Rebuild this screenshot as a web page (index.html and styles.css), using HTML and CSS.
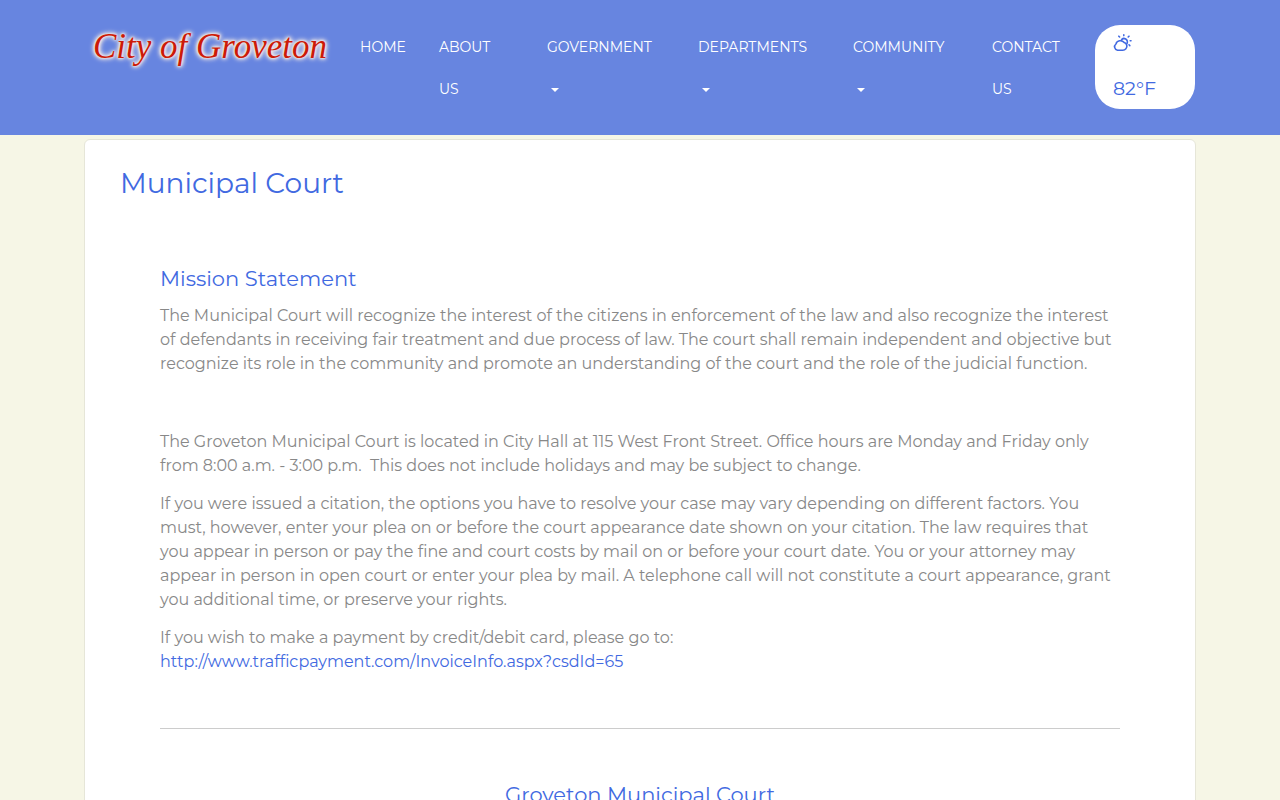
FILE: index.html
```html
<!DOCTYPE html>
<html lang="en">
<head>
    <meta charset="UTF-8">
    <meta name="viewport" content="width=device-width, initial-scale=1.0">
    <title>Municipal Court - City of Groveton</title>
    <link rel="stylesheet" href="styles.css">
</head>
<body>
    <header class="site-header">
        <div class="container header-row">
            <a class="logo" href="#">City of Groveton</a>
            <nav class="main-nav">
                <a class="nav-home" href="#">HOME</a>
                <a class="nav-about" href="#">ABOUT<br>US</a>
                <a class="nav-government" href="#">GOVERNMENT<span class="caret"></span></a>
                <a class="nav-departments" href="#">DEPARTMENTS<span class="caret"></span></a>
                <a class="nav-community" href="#">COMMUNITY<span class="caret"></span></a>
                <a class="nav-contact" href="#">CONTACT<br>US</a>
            </nav>
            <a class="weather" href="#">
                <svg class="weather-icon" viewBox="0 0 20 20" aria-hidden="true">
                    <path d="M4.500 16.300a3.600 3.600 0 0 1-1.600-6.300a4.700 4.500 0 0 1 8.300-1.400a3.700 3.700 0 0 1 1.700 6.100q-1.200 1.500-3.200 1.600z"/>
                    <path d="M8.200 6.300a3.200 3.200 0 1 1 5.800 3.200M10.800.9v.7M5.800 2.200l.8.800M16 2.200l-.8.800M17.200 6.700h.8M16 10.800l.8.800"/>
                </svg>
                <span>82°F</span>
            </a>
        </div>
    </header>

    <main class="container">
        <div class="card">
            <h1>Municipal Court</h1>

            <div class="content">
                <section class="mission">
                    <h2>Mission Statement</h2>
                    <p>The Municipal Court will recognize the interest of the citizens in enforcement of the law and also recognize the interest of defendants in receiving fair treatment and due process of law. The court shall remain independent and objective but recognize its role in the community and promote an understanding of the court and the role of the judicial function.</p>
                </section>

                <section>
                    <p>The Groveton Municipal Court is located in City Hall at 115 West Front Street. Office hours are Monday and Friday only from 8:00 a.m. - 3:00 p.m.&nbsp; This does not include holidays and may be subject to change.</p>
                    <p>If you were issued a citation, the options you have to resolve your case may vary depending on different factors. You must, however, enter your plea on or before the court appearance date shown on your citation. The law requires that you appear in person or pay the fine and court costs by mail on or before your court date. You or your attorney may appear in person in open court or enter your plea by mail. A telephone call will not constitute a court appearance, grant you additional time, or preserve your rights.</p>
                    <p>If you wish to make a payment by credit/debit card, please go to:<br>
                    <a href="#">http://www.trafficpayment.com/InvoiceInfo.aspx?csdId=65</a></p>
                </section>

                <hr>

                <h2 class="centered">Groveton Municipal Court</h2>
            </div>
        </div>
    </main>
</body>
</html>
```

FILE: styles.css
```css
* {
    box-sizing: border-box;
}

body {
    margin: 0;
    background-color: #f6f6e6;
    color: #888;
    font-family: Montserrat, Inter, "Open Sans", sans-serif;
    font-size: 16px;
    line-height: 24px;
}

a {
    color: #4169e1;
    text-decoration: none;
}

.container {
    width: 100%;
    max-width: 1112px;
    margin: 0 auto;
}

/* Header */
.site-header {
    background-color: #6785e0;
    padding: 25px 0;
}

.header-row {
    display: flex;
    align-items: flex-start;
}

.logo {
    flex: 1;
    padding-left: 9px;
    font-family: "Liberation Serif", serif;
    font-size: 35px;
    font-style: italic;
    line-height: 44px;
    white-space: nowrap;
    color: #cc1a08;
    text-shadow: 0 0 2px #f6ece6, 0 0 3px #f6ece6, 0 0 4px #f6ece6, 0 0 5px #f6ece6, 0 0 6px #f6ece6;
}

.main-nav {
    display: flex;
    padding-top: 1px;
}

.main-nav a {
    padding-left: 17px;
    color: #fff;
    font-size: 14px;
    line-height: 42px;
}

.nav-home {
    width: 79px;
}

.nav-about {
    width: 108px;
}

.nav-government {
    width: 151px;
}

.nav-departments {
    width: 155px;
}

.nav-community {
    width: 139px;
}

.nav-contact {
    width: 120px;
}

.caret {
    display: block;
    width: 8px;
    height: 4px;
    margin: 20px 0 0 4px;
    border-top: 4px solid #fff;
    border-left: 4px solid transparent;
    border-right: 4px solid transparent;
}

.weather {
    width: 100px;
    height: 84px;
    margin-right: 1px;
    padding: 0 18px;
    border-radius: 25px;
    background-color: #fff;
    font-size: 19px;
    line-height: 42px;
}

.weather span {
    display: block;
}

.weather-icon {
    display: block;
    width: 20px;
    height: 20px;
    margin: 9px 0 14px;
    fill: none;
    stroke: #4169e1;
    stroke-width: 1.6;
    stroke-linecap: round;
}

/* Page content */
.card {
    margin-top: 4px;
    padding: 23px 35px;
    border: 1px solid #e6e6d8;
    border-radius: 6px;
    background-color: #fff;
}

h1,
h2 {
    margin: 0;
    color: #4169e1;
    font-weight: 400;
}

h1 {
    font-size: 28px;
    line-height: 40px;
}

h2 {
    font-size: 21px;
    line-height: 28px;
}

.content {
    padding: 62px 40px;
}

.content p {
    margin: 0 0 14px;
}

.mission {
    margin-bottom: 54px;
}

.mission h2 {
    margin-bottom: 11px;
}

hr {
    margin: 54px 0 52px;
    border: 0;
    border-top: 1px solid #ccc;
}

.centered {
    text-align: center;
}
```
